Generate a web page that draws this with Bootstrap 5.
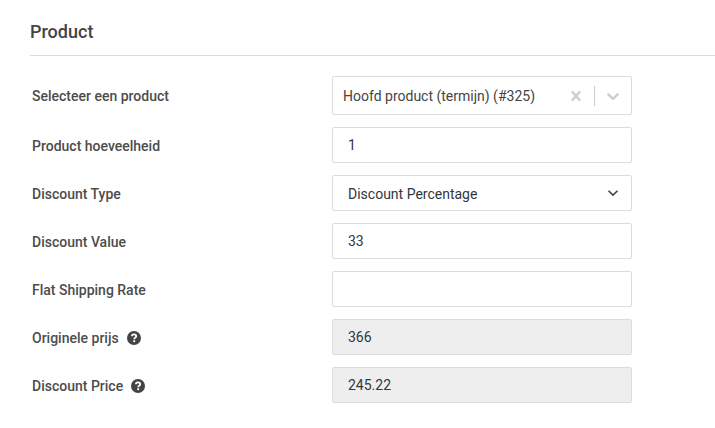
<!DOCTYPE html>
<html lang="nl">
<head>
<meta charset="utf-8">
<meta name="viewport" content="width=device-width, initial-scale=1">
<title>Product</title>
<link href="https://cdn.jsdelivr.net/npm/bootstrap@5.3.0/dist/css/bootstrap.min.css" rel="stylesheet">
<style>
body { font-family: Roboto, "Liberation Sans", sans-serif; font-size: 14px; line-height: 20px; color: #444; background: #fff; }
.panel { padding: 20px 0 24px 30px; }
.panel-title { font-size: 18px; line-height: 24px; font-weight: 500; padding-bottom: 11px; border-bottom: 1px solid #dcdcdc; margin-bottom: 20px; color: #444; }
.fields { display: grid; row-gap: 12px; padding-left: 2px; }
.field-row { display: grid; grid-template-columns: 300px minmax(0, 300px); align-items: center; }
.field-row label { font-weight: 500; padding-top: 1px; color: #4c4c4c; }
.field, .field-box { height: 36px; border: 1px solid #dcdcdc; border-radius: 2px; background-color: #fff; }
.field { font-size: 14px; line-height: 20px; padding: 7px 15px; color: #32373c; }
.field:read-only { background-color: #eee; }
.field-box select { font-size: 14px; line-height: 20px; color: #32373c; appearance: none; outline: 0; padding: 1px 15px 0; min-width: 0; }
.field-box.tall { height: 39px; }
.field-box.tall select { padding: 0 10px; color: #444; }
.icon-btn { padding: 8px; color: #ccc; line-height: 0; }
.divider { width: 1px; height: 20px; background: #ccc; }
.arrow { margin-right: 12px; pointer-events: none; }
</style>
</head>
<body>
<main class="panel">
<h2 class="panel-title">Product</h2>
<form class="fields">
  <div class="field-row">
    <label for="product">Selecteer een product</label>
    <div class="field-box tall d-flex align-items-center">
      <select id="product" class="flex-grow-1 border-0 bg-transparent h-100"><option>Hoofd product (termijn) (#325)</option></select>
      <button type="button" class="icon-btn border-0 bg-transparent" aria-label="Wissen"><svg width="20" height="20" viewBox="0 0 20 20" fill="currentColor"><path d="M14.348 14.849c-0.469 0.469-1.229 0.469-1.697 0l-2.651-3.030-2.651 3.029c-0.469 0.469-1.229 0.469-1.697 0-0.469-0.469-0.469-1.229 0-1.697l2.758-3.15-2.759-3.152c-0.469-0.469-0.469-1.228 0-1.697s1.228-0.469 1.697 0l2.652 3.031 2.651-3.031c0.469-0.469 1.228-0.469 1.697 0s0.469 1.229 0 1.697l-2.758 3.152 2.758 3.15c0.469 0.469 0.469 1.229 0 1.698z"/></svg></button>
      <span class="divider"></span>
      <button type="button" class="icon-btn border-0 bg-transparent" aria-label="Openen"><svg width="20" height="20" viewBox="0 0 20 20" fill="currentColor"><path d="M4.516 7.548c0.436-0.446 1.043-0.481 1.576 0l3.908 3.747 3.908-3.747c0.533-0.481 1.141-0.446 1.574 0 0.436 0.445 0.408 1.197 0 1.615-0.406 0.418-4.695 4.502-4.695 4.502-0.217 0.223-0.502 0.335-0.787 0.335s-0.57-0.112-0.789-0.335c0 0-4.287-4.084-4.695-4.502s-0.436-1.17 0-1.615z"/></svg></button>
    </div>
  </div>
  <div class="field-row">
    <label for="qty">Product hoeveelheid</label>
    <input id="qty" class="field w-100" type="text" value="1">
  </div>
  <div class="field-row">
    <label for="type">Discount Type</label>
    <div class="field-box d-flex align-items-center">
      <select id="type" class="flex-grow-1 border-0 bg-transparent h-100"><option>Discount Percentage</option></select>
      <svg class="arrow" width="12" height="12" viewBox="0 0 12 12" fill="none" stroke="#444" stroke-width="1.6"><path d="M1.5 3.7 6 8.1l4.5-4.4"/></svg>
    </div>
  </div>
  <div class="field-row">
    <label for="value">Discount Value</label>
    <input id="value" class="field w-100" type="text" value="33">
  </div>
  <div class="field-row">
    <label for="shipping">Flat Shipping Rate</label>
    <input id="shipping" class="field w-100" type="text">
  </div>
  <div class="field-row">
    <label for="original" class="d-flex align-items-center gap-2">Originele prijs
      <svg width="14" height="14" viewBox="0 0 14 14"><circle cx="7" cy="7" r="7" fill="#444"/><path d="M4.9 5.3C4.9 3.9 5.8 3.3 7 3.3s2.2.7 2.2 1.9c0 1.5-2 1.4-2 3.1" fill="none" stroke="#fff" stroke-width="1.8"/><path d="M6.2 9.3h2v1.8h-2z" fill="#fff"/></svg></label>
    <input id="original" class="field w-100" type="text" value="366" readonly>
  </div>
  <div class="field-row">
    <label for="price" class="d-flex align-items-center gap-2">Discount Price
      <svg width="14" height="14" viewBox="0 0 14 14"><circle cx="7" cy="7" r="7" fill="#444"/><path d="M4.9 5.3C4.9 3.9 5.8 3.3 7 3.3s2.2.7 2.2 1.9c0 1.5-2 1.4-2 3.1" fill="none" stroke="#fff" stroke-width="1.8"/><path d="M6.2 9.3h2v1.8h-2z" fill="#fff"/></svg></label>
    <input id="price" class="field w-100" type="text" value="245.22" readonly>
  </div>
</form>
</main>
<script src="https://cdn.jsdelivr.net/npm/bootstrap@5.3.0/dist/js/bootstrap.bundle.min.js"></script>
</body>
</html>
